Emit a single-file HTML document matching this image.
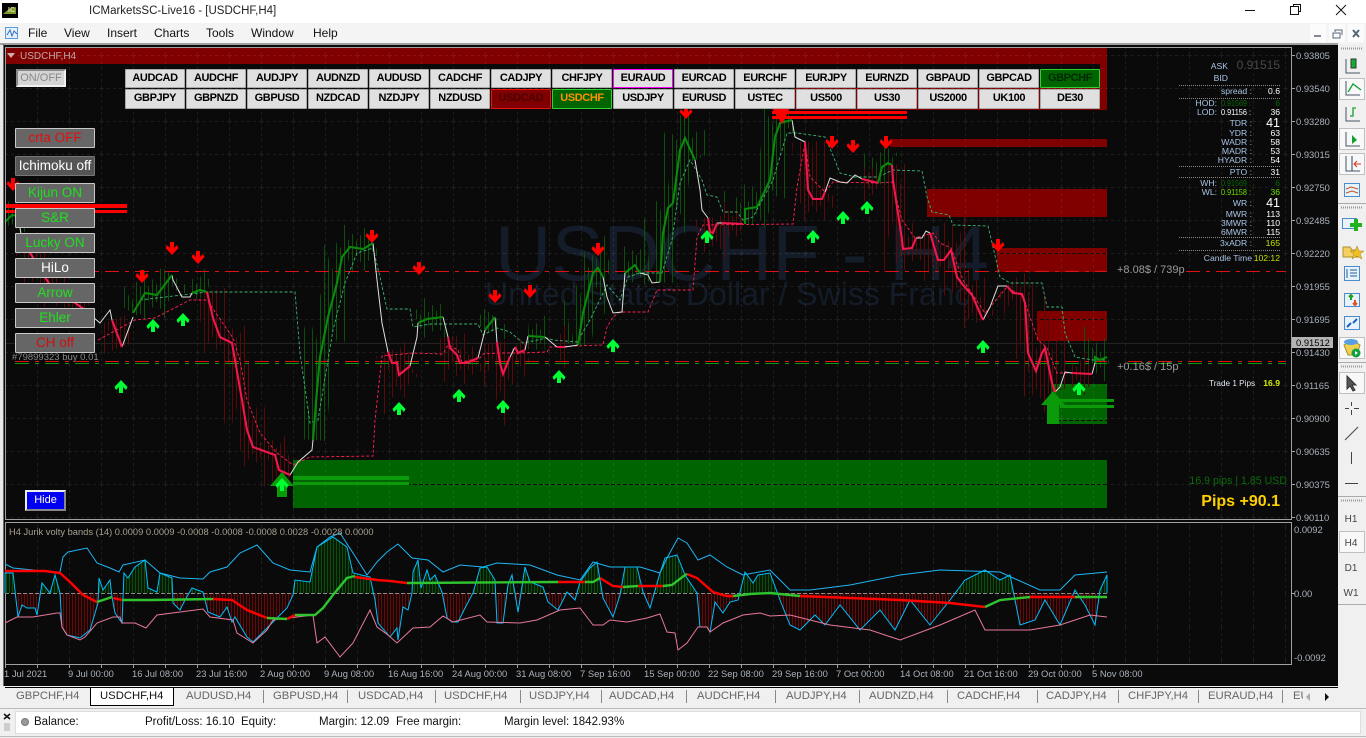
<!DOCTYPE html>
<html><head><meta charset="utf-8"><title>USDCHF,H4</title>
<style>
html,body{margin:0;padding:0;width:1366px;height:738px;overflow:hidden;background:#f0f0f0;font-family:"Liberation Sans",sans-serif}
.a{position:absolute;white-space:nowrap}
#top{left:0;top:0;width:1366px;height:23px;background:#fff}
#menu{left:0;top:23px;width:1366px;height:21px;background:#f4f4f4;font-size:12px;color:#111}
#menu span{position:absolute;top:3px}
.b{position:absolute;width:58px;height:17px;line-height:17px;background:#e0e0e0;border:1px solid #aaa;text-align:center;font-weight:bold;font-size:11px;letter-spacing:-.4px;color:#000;border-radius:1px}
.s{position:absolute;left:15px;width:78px;height:18px;line-height:18px;background:#666;border:1px solid #c8c8c8;text-align:center;font-size:13.5px;color:#1fe01f;border-radius:1px}
.tab{position:absolute;top:690px;font-size:11.3px;color:#666}
.st{position:absolute;top:716px;font-size:11.5px;color:#111}
</style></head><body>
<div class="a" id="top"></div>
<div class="a" id="menu">
<span style="left:28px">File</span><span style="left:64px">View</span><span style="left:107px">Insert</span><span style="left:154px">Charts</span><span style="left:206px">Tools</span><span style="left:251px">Window</span><span style="left:313px">Help</span>
</div>
<div class="a" style="left:89px;top:5px;font-size:11.5px;color:#222">ICMarketsSC-Live16 - [USDCHF,H4]</div>

<svg class="a" style="left:0;top:0" width="1366" height="738" viewBox="0 0 1366 738" xmlns="http://www.w3.org/2000/svg">
<defs>
<pattern id="g1" width="4" height="4" patternUnits="userSpaceOnUse"><rect width="1" height="4" fill="#0b500b"/></pattern>
<pattern id="g2" width="8" height="4" patternUnits="userSpaceOnUse"><rect x="0" width="1" height="4" fill="#0b500b"/></pattern>
<pattern id="g3" width="20" height="4" patternUnits="userSpaceOnUse"><rect x="4" width="1" height="4" fill="#0b500b"/></pattern>
<pattern id="r1" width="4" height="4" patternUnits="userSpaceOnUse"><rect width="1" height="4" fill="#5a0a0a"/></pattern>
<pattern id="r2" width="8" height="4" patternUnits="userSpaceOnUse"><rect x="0" width="1" height="4" fill="#5a0a0a"/></pattern>
<pattern id="r3" width="20" height="4" patternUnits="userSpaceOnUse"><rect x="4" width="1" height="4" fill="#5a0a0a"/></pattern>
<pattern id="hg" width="3" height="4" patternUnits="userSpaceOnUse"><rect width="3" height="4" fill="#061a06"/><rect width="1" height="4" fill="#0d4d0d"/></pattern>
<pattern id="hr" width="3" height="4" patternUnits="userSpaceOnUse"><rect width="3" height="4" fill="#1a0505"/><rect width="1" height="4" fill="#5e0e0e"/></pattern>
<pattern id="grid" x="5" y="22" width="32" height="33" patternUnits="userSpaceOnUse"><path d="M.5 0V33M0 .5H32" stroke="#fff" stroke-opacity=".08" stroke-dasharray="3 3" fill="none"/></pattern>
<pattern id="gridv" x="5" y="0" width="32" height="33" patternUnits="userSpaceOnUse"><path d="M.5 0V33" stroke="#fff" stroke-opacity=".08" stroke-dasharray="3 3" fill="none"/></pattern>
<pattern id="tk" x="5" y="0" width="32" height="8" patternUnits="userSpaceOnUse"><rect width="1" height="8" fill="#a0a0a0"/></pattern>
<clipPath id="up"><rect x="5" y="523" width="1102" height="70"/></clipPath>
<clipPath id="dn"><rect x="5" y="593" width="1102" height="71"/></clipPath>
<clipPath id="main"><rect x="5" y="48" width="1285" height="471"/></clipPath>
<path id="gp" fill="none" d="M5 222L12 215L18 216M133 313L145 293L157 295L172 275M192 293L200 290L207 292M313 440L317 390L320 357L328 317L337 283L342 257L350 247L363 249L373 243M418 323L427 319L443 317M485 330L495 317M528 336L545 337M578 345L583 313L593 273L598 268L603 277M625 273L635 265L640 273M660 282L663 233L668 208L673 203L680 150L685 138L695 160M745 224L745 209L757 207L770 180L775 137L780 123L792 120M878 183L882 167L888 163L892 165M1095 363L1095 357L1100 360L1107 357"/>
<path id="rp" fill="none" d="M22 240L50 285L85 310M112 320L122 347M207 292L213 318L220 337L232 343L235 360L242 400L247 430L253 447L275 455L279 470L290 475M388 352L392 363L397 363L399 375L410 366M448 337L450 348L457 355L460 363L467 363L478 358M497 342L500 363L503 374L510 357M515 347L518 353L525 350M557 347L565 347M708 218L710 232L713 233L717 223M722 223L743 224M805 142L808 190L813 199L822 199L825 192M862 179L878 183M892 165L893 180L902 240L903 249L912 248L916 238M930 233L938 260L944 260L951 250L957 277L963 285L972 295L983 320M1007 286L1013 293L1022 294L1025 303L1028 353L1036 371L1042 353L1045 348L1052 383L1055 392M1072 373L1092 374"/>
<path id="fast" d="M5 593L5 573L13 573L18 617L22 605L27 608L35 608L37 615L42 583L50 593L55 575L60 593L62 627L67 635L80 638L90 630L98 603L99 578L103 590L110 580L112 597L115 613L122 623L124 573L128 578L135 567L145 560L148 588L157 592L160 573L172 578L173 603L180 610L185 600L192 588L203 592L208 612L220 617L227 607L232 622L235 617L247 637L253 642L270 625L287 608L293 595L295 580L310 582L317 547L333 537L347 547L353 573L370 577L375 600L378 623L390 637L397 628L398 640L403 607L408 610L412 593L413 572L418 560L421 588L427 570L430 580L435 575L442 592L447 618L452 622L458 622L465 608L473 593L480 568L487 567L495 580L497 623L503 623L508 585L512 575L518 612L525 567L530 582L543 587L548 602L558 610L567 592L575 600L580 582L590 568L597 562L603 598L613 617L620 595L625 567L637 567L643 592L650 608L660 573L665 558L677 555L685 575L697 593L700 627L707 627L710 632L715 602L723 613L730 602L738 600L745 572L753 583L758 575L770 573L780 600L790 625L800 630L815 615L825 625L840 605L860 630L880 610L895 630L910 600L930 625L950 600L965 580L985 570L1000 580L1010 575L1020 625L1035 620L1045 600L1060 625L1075 590L1085 605L1095 625L1100 590L1107 575L1107 593"/>
<path id="ad" d="M-2-7H2V-1L5-4L6.5-1L0 6L-6.5-1L-5-4L-2-1Z" fill="#f00"/>
<path id="au" d="M-2 7H2V1L5 4L6.5 1L0-6L-6.5 1L-5 4L-2 1Z" fill="#0f3"/>
</defs>

<!-- black area -->
<rect x="0" y="44" width="4" height="642" fill="#e8e8e8"/>
<rect x="3" y="44" width="1335" height="642" fill="#0a0a0a"/>
<rect x="0" y="43" width="1338" height="2" fill="#a0a0a0"/>
<rect x="3" y="44" width="1" height="642" fill="#6a6a6a"/>

<!-- watermark -->
<text x="495" y="280" font-family="Liberation Sans" font-size="78" fill="#131c28">USDCHF - H4</text>
<text x="485" y="305" font-family="Liberation Sans" font-size="32" fill="#131c28">United States Dollar / Swiss Franc</text>

<!-- zones -->
<g fill="#800000">
<rect x="5" y="48" width="1102" height="16"/>
<rect x="1100" y="63" width="7" height="47"/>
<rect x="795" y="88" width="312" height="22"/>
<rect x="890" y="139" width="217" height="8"/>
<rect x="927" y="189" width="180" height="28"/>
<rect x="997" y="248" width="110" height="24"/>
<rect x="1037" y="311" width="70" height="30"/>
</g>
<g fill="#006400">
<rect x="293" y="460" width="814" height="48"/>
<rect x="1051" y="384" width="56" height="40"/>
</g>
<rect x="1051" y="396" width="7" height="24" fill="#0a9a0a"/>
<rect x="5" y="48" width="1285" height="471" fill="url(#grid)"/>
<rect x="5" y="523" width="1285" height="141" fill="url(#gridv)"/>
<path d="M293 484.5H1107M1051 420.5H1107M1040 319.5H1107M1000 253.5H1107" stroke="#111" stroke-dasharray="4 2"/>
<path d="M5 343.5H1291" stroke="#222"/>

<!-- wicks -->
<g clip-path="url(#main)">
<use href="#gp" stroke="url(#g3)" stroke-width="42"/>
<use href="#rp" stroke="url(#r3)" stroke-width="42"/>
<use href="#gp" stroke="url(#g2)" stroke-width="26"/>
<use href="#rp" stroke="url(#r2)" stroke-width="26"/>
<use href="#gp" stroke="url(#g1)" stroke-width="14"/>
<use href="#rp" stroke="url(#r1)" stroke-width="14"/>
</g>

<!-- h lines -->
<path d="M15 271.5H1107M1186 271.5H1286" stroke="#e01010" stroke-dasharray="14 6 4 6" fill="none"/>
<path d="M15 361.5H1107M1128 361.5H1286" stroke="#e01010" stroke-dasharray="14 6 4 6" fill="none"/>
<path d="M15 363.5H1107M1128 363.5H1286" stroke="#0a9a0a" stroke-dasharray="14 6 4 6" fill="none"/>

<!-- signal dashed -->
<path fill="none" stroke="#3cb371" stroke-width=".9" stroke-dasharray="3 2" d="M140 300L207 292L295 292L300 353L310 423L318 420L333 330L345 283L357 253L373 248L380 277L387 309L410 309L413 327L430 324L478 324L483 335L497 328L510 332L523 343L547 338L553 340L577 342L590 320L607 285L620 300L628 277L640 273L662 273L672 240L680 183L690 160L702 180L707 195L717 197L723 212L737 212L743 220L753 217L773 180L787 133L797 133L825 137L832 153L840 173L855 177L878 177L893 170L922 171L927 197L932 212L949 215L953 225L988 226L993 247L1000 277L1010 283L1042 283L1047 307L1062 307L1065 333L1075 357L1093 360L1107 360"/>
<path fill="none" stroke="#ff2050" stroke-width=".9" stroke-dasharray="3 2" d="M98 340L135 320L155 318L190 300L207 300L233 338L240 360L247 400L260 433L277 453L293 465L310 457L373 456L375 420L382 356L413 353L443 354L448 345L458 350L462 362L480 358L483 354L498 353L520 353L547 352L550 347L603 345L607 327L613 317L620 312L648 312L657 290L693 290L697 237L703 225L793 224L797 187L805 143L810 177L825 192L833 182L878 183L892 182L902 220L915 238L933 233L940 243L951 248L963 280L985 313L1007 287L1023 297L1038 340L1047 348L1057 373L1072 373L1092 374"/>

<!-- price lines -->
<path fill="none" stroke="#e0e0e0" stroke-width="1" d="M18 216L22 240M85 310L100 323L110 310L112 320M122 347L133 317M172 275L173 280L182 297L190 297L192 293M290 475L298 462L312 450L313 440M373 243L377 280L382 323L388 352M410 366L417 337L418 323M443 317L448 337M478 358L485 330M495 317L497 342M510 357L515 347M525 350L528 336M545 337L557 347M565 347L578 345M603 277L607 297L613 313L622 312L625 273M640 273L648 275L652 283L660 282M695 160L700 190L702 210L708 218M717 223L722 223M792 120L795 137L805 142M825 192L830 178L840 182L847 183L855 175L862 179M916 238L922 238L926 231L930 233M983 320L990 307L998 286L1007 286M1055 392L1060 387L1065 372L1072 373M1092 374L1095 363"/>
<use href="#gp" stroke="#0b8a0b" stroke-width="2.1"/>
<use href="#rp" stroke="#f0184c" stroke-width="2.1"/>

<!-- thick lines -->
<g fill="#f00"><rect x="5" y="204" width="122" height="4"/><rect x="5" y="210" width="122" height="3"/><rect x="772" y="111" width="135" height="3"/><rect x="772" y="116" width="135" height="3"/></g>
<path d="M772 108L790 108L782 124Z" fill="#f00"/>
<g fill="#0a9a0a"><rect x="293" y="476" width="116" height="4"/><rect x="293" y="482" width="116" height="3"/><rect x="1060" y="399" width="54" height="3"/><rect x="1060" y="405" width="54" height="3"/></g>
<!-- big up arrows -->
<path d="M270 486L282 472L294 486L287 486L287 497L277 497L277 486Z" fill="#0a9a0a"/>
<path d="M1041 405L1053 391L1065 405L1059 405L1059 424L1047 424L1047 405Z" fill="#0a9a0a"/>
<use href="#au" x="282" y="484" />

<!-- arrows -->
<use href="#ad" x="13" y="185"/><use href="#ad" x="142" y="277"/><use href="#ad" x="172" y="249"/><use href="#ad" x="198" y="258"/><use href="#ad" x="372" y="237"/><use href="#ad" x="419" y="269"/><use href="#ad" x="495" y="297"/><use href="#ad" x="530" y="292"/><use href="#ad" x="598" y="250"/><use href="#ad" x="686" y="113"/><use href="#ad" x="832" y="143"/><use href="#ad" x="853" y="147"/><use href="#ad" x="886" y="143"/><use href="#ad" x="998" y="246"/>
<use href="#au" x="153" y="325"/><use href="#au" x="183" y="319"/><use href="#au" x="121" y="386"/><use href="#au" x="399" y="408"/><use href="#au" x="459" y="395"/><use href="#au" x="503" y="406"/><use href="#au" x="559" y="376"/><use href="#au" x="613" y="345"/><use href="#au" x="707" y="236"/><use href="#au" x="813" y="236"/><use href="#au" x="843" y="217"/><use href="#au" x="867" y="207"/><use href="#au" x="983" y="346"/><use href="#au" x="1079" y="388"/>

<!-- frames -->
<path d="M5.5 47.5H1291.5V519.5H5.5ZM5.5 522.5H1291.5V664.5H5.5Z" fill="none" stroke="#a0a0a0"/>
<rect x="5" y="664" width="1100" height="4" fill="url(#tk)"/>
<path d="M1291 55.5h4M1291 88.5h4M1291 121.5h4M1291 154.5h4M1291 187.5h4M1291 220.5h4M1291 253.5h4M1291 286.5h4M1291 319.5h4M1291 352.5h4M1291 385.5h4M1291 418.5h4M1291 451.5h4M1291 484.5h4M1291 517.5h4M1291 593.5h4" stroke="#a0a0a0"/>

<!-- oscillator -->
<use href="#fast" fill="url(#hg)" clip-path="url(#up)"/>
<use href="#fast" fill="url(#hr)" clip-path="url(#dn)"/>
<path d="M5 593.5H1107" stroke="#8a8a8a" stroke-dasharray="4 2"/>
<path fill="none" stroke="#1fb6f5" d="M5 564L13 568L33 570L57 573L60 572L63 557L68 552L87 548L97 563L110 568L119 572L123 565L145 560L160 573L180 578L203 579L210 572L227 567L240 553L257 545L273 563L290 570L310 572L317 547L330 537L340 533L353 553L367 575L377 562L387 552L398 544L412 558L428 560L443 572L460 565L483 567L497 563L530 565L557 575L580 580L593 562L610 567L640 567L660 573L667 558L678 538L687 543L698 560L710 555L727 567L743 575L770 570L790 590L810 590L850 585L900 575L940 570L1000 572L1040 590L1060 590L1075 575L1107 572"/>
<use href="#fast" fill="none" stroke="#00bfff"/>
<path fill="none" stroke="#e8789a" d="M5 623L17 617L33 617L57 613L60 613L62 627L67 635L80 640L85 637L97 623L113 617L120 617L122 623L135 623L146 628L157 615L180 612L203 609L210 617L233 620L237 633L253 643L267 630L273 620L313 615L317 643L325 637L340 657L353 643L370 610L377 627L388 635L397 643L413 628L430 627L443 616L453 622L480 615L487 622L520 623L537 620L560 610L580 608L593 625L603 625L610 620L627 622L647 618L660 614L667 632L675 633L678 650L687 643L698 627L707 627L710 632L723 623L743 615L760 613L770 616L790 615L830 625L870 630L900 640L940 625L975 610L985 630L1030 630L1060 625L1090 615L1107 617"/>
<g fill="none" stroke-width="2.4">
<path stroke="#f00" d="M5 571L45 571L60 573L70 582L83 595L97 602M113 598L122 600M213 599L232 600L247 610L267 618M287 619L295 615M355 577L377 580L390 581L407 583M558 582L585 582M600 578L613 586L623 587M638 586L663 586M687 574L697 578L713 592L727 596L733 596M800 596L850 598L900 600L950 603L985 607M1030 597L1075 597"/>
<path stroke="#2fc42f" d="M97 602L112 597M122 600L152 600L213 599M267 618L287 619M295 615L315 615L323 608L333 595L347 578L355 576M407 583L558 582M585 582L593 582L600 578M623 587L638 586M663 586L672 585L685 575L687 574M733 596L750 594L770 593L800 596M985 607L1000 600L1030 597M1075 597L1107 597"/>
</g>

<!-- axis labels -->
<g font-family="Liberation Sans" font-size="9.4" fill="#aab2bc">
<text x="1296" y="59">0.93805</text><text x="1296" y="92">0.93540</text><text x="1296" y="125">0.93280</text><text x="1296" y="158">0.93015</text><text x="1296" y="191">0.92750</text><text x="1296" y="224">0.92485</text><text x="1296" y="257">0.92220</text><text x="1296" y="290">0.91955</text><text x="1296" y="323">0.91695</text><text x="1296" y="356">0.91430</text><text x="1296" y="389">0.91165</text><text x="1296" y="422">0.90900</text><text x="1296" y="455">0.90635</text><text x="1296" y="488">0.90375</text><text x="1296" y="521">0.90110</text>
<text x="1294" y="533">0.0092</text><text x="1294" y="597">0.00</text><text x="1294" y="661">-0.0092</text>
</g>
<rect x="1292" y="337" width="41" height="11" fill="#b4b4b4"/>
<text x="1296" y="346" font-family="Liberation Sans" font-size="9.4" fill="#000">0.91512</text>
<g font-family="Liberation Sans" font-size="9.4" fill="#aab2bc">
<text x="4" y="677">1 Jul 2021</text><text x="68" y="677">9 Jul 00:00</text><text x="132" y="677">16 Jul 08:00</text><text x="196" y="677">23 Jul 16:00</text><text x="260" y="677">2 Aug 00:00</text><text x="324" y="677">9 Aug 08:00</text><text x="388" y="677">16 Aug 16:00</text><text x="452" y="677">24 Aug 00:00</text><text x="516" y="677">31 Aug 08:00</text><text x="580" y="677">7 Sep 16:00</text><text x="644" y="677">15 Sep 00:00</text><text x="708" y="677">22 Sep 08:00</text><text x="772" y="677">29 Sep 16:00</text><text x="836" y="677">7 Oct 00:00</text><text x="900" y="677">14 Oct 08:00</text><text x="964" y="677">21 Oct 16:00</text><text x="1028" y="677">29 Oct 00:00</text><text x="1092" y="677">5 Nov 08:00</text>
</g>
<text x="9" y="535" font-family="Liberation Sans" font-size="9.34" fill="#a8a090">H4 Jurik volty bands (14) 0.0009 0.0009 -0.0008 -0.0008 -0.0008 0.0028 -0.0028 0.0000</text>

<!-- chart header -->
<path d="M7 53H15L11 58Z" fill="#c8b0b0"/>
<text x="20" y="59" font-family="Liberation Sans" font-size="10" fill="#c0a8a8">USDCHF,H4</text>
<text x="1117" y="273" font-family="Liberation Sans" font-size="11" fill="#9a9a9a">+8.08$ / 739p</text>
<text x="1117" y="370" font-family="Liberation Sans" font-size="11" fill="#9a9a9a">+0.16$ / 15p</text>

<!-- info panel -->
<g font-family="Liberation Sans" font-size="8.6" fill="#a9c5e6" text-anchor="end">
<text x="1228" y="69">ASK</text><text x="1228" y="81">BID</text>
<text x="1252" y="94">spread :</text><text x="1217" y="106">HOD:</text><text x="1217" y="115">LOD:</text>
<text x="1252" y="126">TDR :</text><text x="1252" y="136">YDR :</text><text x="1252" y="145">WADR :</text><text x="1252" y="154">MADR :</text><text x="1252" y="163">HYADR :</text><text x="1252" y="175">PTO :</text>
<text x="1217" y="186">WH:</text><text x="1217" y="195">WL:</text><text x="1252" y="206">WR :</text><text x="1252" y="217">MWR :</text><text x="1252" y="226">3MWR :</text><text x="1252" y="235">6MWR :</text><text x="1252" y="246">3xADR :</text><text x="1252" y="261">Candle Time</text>
</g>
<g font-family="Liberation Sans" font-size="8.6" fill="#fff" text-anchor="end">
<text x="1280" y="94">0.6</text><text x="1280" y="106" fill="#0a6a0a">6</text><text x="1280" y="115">36</text>
<text x="1280" y="127" font-size="12.5">41</text><text x="1280" y="136">63</text><text x="1280" y="145">58</text><text x="1280" y="154">53</text><text x="1280" y="163">54</text><text x="1280" y="175">31</text>
<text x="1280" y="186" fill="#0a6a0a">6</text><text x="1280" y="195" fill="#6fe000">36</text>
<text x="1280" y="207" font-size="12.5">41</text><text x="1280" y="217">113</text><text x="1280" y="226">110</text><text x="1280" y="235">115</text><text x="1280" y="246" fill="#c8e000">165</text><text x="1280" y="261" fill="#c8e000">102:12</text>
</g>
<g font-family="Liberation Sans" font-size="8.6">
<text x="1221" y="106" fill="#0a6a0a" textLength="30" lengthAdjust="spacingAndGlyphs">0.91569 :</text>
<text x="1221" y="115" fill="#fff" textLength="30" lengthAdjust="spacingAndGlyphs">0.91156 :</text>
<text x="1221" y="186" fill="#0a6a0a" textLength="30" lengthAdjust="spacingAndGlyphs">0.91569 :</text>
<text x="1221" y="195" fill="#6fe000" textLength="30" lengthAdjust="spacingAndGlyphs">0.91158 :</text>
</g>
<text x="1280" y="69" text-anchor="end" font-family="Liberation Sans" font-size="12" fill="#4a4a4a">0.91515</text>
<path d="M1179 85.5H1281M1179 98.5H1281M1179 166.5H1281M1179 177.5H1281M1179 237.5H1281M1179 250.5H1281" stroke="#8a8a8a" stroke-dasharray="1 1"/>
<text x="1209" y="386" font-family="Liberation Sans" font-size="8.2" fill="#dfe6f0">Trade 1 Pips</text>
<text x="1280" y="386" text-anchor="end" font-family="Liberation Sans" font-size="8.6" font-weight="bold" fill="#d8f000">16.9</text>
<text x="1287" y="484" text-anchor="end" font-family="Liberation Sans" font-size="10.6" fill="#0b6b0b">16.9 pips | 1.85 USD</text>
<text x="1280" y="506" text-anchor="end" font-family="Liberation Sans" font-size="16" font-weight="bold" fill="#ffd000">Pips +90.1</text>

<!-- title bar icons -->
<rect x="2" y="3" width="16" height="15" fill="#000"/>
<path d="M3 14L9 9L16 7V14Z" fill="#7a9a30"/><text x="8" y="12" font-family="Liberation Sans" font-size="7" font-weight="bold" fill="#e8e0a0">IC</text>
<rect x="5.5" y="27.5" width="12" height="11" fill="#e6f0fa" stroke="#5a9bd8"/><path d="M7 35L10 30L12 36L14 31L17 34" fill="none" stroke="#3070c0"/>
<path d="M1245 10.5H1255" stroke="#111"/>
<path d="M1293.5 6V4.5H1300.5V11.5H1299" fill="none" stroke="#111"/><rect x="1290.5" y="6.5" width="8" height="8" fill="#fff" stroke="#111"/>
<path d="M1336 5L1346 15M1346 5L1336 15" stroke="#111"/>
<rect x="1310" y="24" width="16" height="18" fill="#fbfbfb"/><rect x="1329" y="24" width="16" height="18" fill="#fbfbfb"/><rect x="1348" y="24" width="16" height="18" fill="#fbfbfb"/>
<rect x="1314" y="35" width="7" height="2" fill="#889"/>
<rect x="1333" y="33" width="7" height="5" fill="none" stroke="#567"/><path d="M1335 32V30H1342V35" fill="none" stroke="#567"/>
<path d="M1353 30L1359 37M1359 30L1353 37" stroke="#567" stroke-width="2"/>

<!-- right toolbar -->
<rect x="1338" y="44" width="28" height="642" fill="#f0f0f0"/>
<path d="M1341 48.5H1363M1341 207.5H1363M1341 366.5H1363M1341 500.5H1363" stroke="#999" stroke-dasharray="1 1" stroke-width="2"/>
<path d="M1338 203.5H1366M1338 362.5H1366M1338 496.5H1366M1338 604.5H1366" stroke="#aaa"/>
<g fill="#f8f8f8" stroke="#c0c0c0"><rect x="1339.5" y="78.5" width="25" height="21"/><rect x="1339.5" y="128.5" width="25" height="21"/><rect x="1339.5" y="153.5" width="25" height="21"/><rect x="1339.5" y="337.5" width="25" height="21"/><rect x="1339.5" y="372.5" width="25" height="21"/><rect x="1339.5" y="531.5" width="25" height="21"/></g>
<g fill="none" stroke="#456">
<path d="M1346 59V73H1360M1346 107V121H1360M1346 132V146H1360M1346 156V171H1360M1346 81V95H1360"/>
</g>
<rect x="1351" y="59" width="5" height="9" fill="#10b030" stroke="#333"/>
<path d="M1348 92L1353 84L1361 90" fill="none" stroke="#10a030" stroke-width="1.3"/>
<path d="M1350 116H1353V108H1356" fill="none" stroke="#10a030" stroke-width="1.3"/>
<path d="M1352 135L1357 140L1352 144Z" fill="#10a030"/>
<path d="M1352 156V171" stroke="#246"/><path d="M1361 164H1355M1357 161L1354 164L1357 167" stroke="#d03010" fill="none"/>
<g fill="#e8f2fb" stroke="#4a8ccc"><rect x="1344.5" y="183.5" width="15" height="13"/><rect x="1344.5" y="266.5" width="15" height="14"/><rect x="1344.5" y="293.5" width="15" height="13"/><rect x="1344.5" y="316.5" width="15" height="13"/><rect x="1342.5" y="218.5" width="14" height="10"/></g>
<path d="M1346 189L1351 187L1358 189M1346 193L1352 191L1358 193" fill="none" stroke="#c05020"/>
<path d="M1350 225H1362M1356 219V231" stroke="#20b020" stroke-width="4"/>
<path d="M1343 247H1350L1352 250H1358V257H1343Z" fill="#f4d060" stroke="#b09030"/><path d="M1357 246L1359 251L1364 251L1360 254L1362 259L1357 256L1352 259L1354 254L1350 251L1355 251Z" fill="#f0c020" stroke="#a08020" stroke-width=".5"/>
<path d="M1347 269V278M1350 270H1357M1350 273H1357M1350 276H1357" stroke="#2060a0"/>
<path d="M1351 295V300M1349 297L1351 295L1353 297" stroke="#20a020" stroke-width="2" fill="none"/><path d="M1355 305V300M1353 303L1355 305L1357 303" stroke="#e05020" stroke-width="2" fill="none"/>
<path d="M1347 327L1351 323M1357 319L1353 323" stroke="#2060c0" stroke-width="2"/>
<path d="M1344 345L1352 340L1360 345L1357 355H1348Z" fill="#f0d050" stroke="#a09030"/><ellipse cx="1351" cy="342" rx="7" ry="3" fill="#5aa0e0"/><circle cx="1356" cy="353" r="4.5" fill="#10a040"/><path d="M1355 351L1358 353L1355 355Z" fill="#fff"/>
<path d="M1347 376L1347 389L1350 386L1353 391L1355 390L1352 385L1356 385Z" fill="#555" stroke="#333"/>
<path d="M1351.5 402V406M1351.5 410V415M1345 408.5H1349M1354 408.5H1359" stroke="#444"/>
<path d="M1345 440L1358 427" stroke="#555" stroke-width="1.2"/>
<path d="M1351.5 452V464" stroke="#444"/><path d="M1345 483.5H1358" stroke="#444"/>
<g font-family="Liberation Sans" font-size="10" fill="#444" text-anchor="middle"><text x="1351" y="522">H1</text><text x="1351" y="546">H4</text><text x="1351" y="571">D1</text><text x="1351" y="596">W1</text></g>

<!-- tabs -->
<rect x="0" y="686" width="1338" height="22" fill="#f0f0f0"/>
<path d="M5 687.5H90M174 687.5H1338" stroke="#000"/>
<rect x="90.5" y="687.5" width="83" height="18" fill="#fff" stroke="#000"/>
<path d="M263.5 690V703M347.5 690V703M435.5 690V703M520.5 690V703M601.5 690V703M686.5 690V703M775.5 690V703M859.5 690V703M947.5 690V703M1037.5 690V703M1118.5 690V703M1198.5 690V703M1282.5 690V703" stroke="#888"/>
<path d="M1310 693V701L1306 697Z" fill="#aaa"/><path d="M1325 693V701L1329 697Z" fill="#111"/>
<!-- status -->
<rect x="0" y="708" width="1366" height="30" fill="#f0f0f0"/>
<path d="M0 708.5H1366M0 736.5H1366" stroke="#bbb"/>
<rect x="15.5" y="711.5" width="1345" height="22" fill="#fff" stroke="#ddd"/>
<path d="M4 714L10 719M10 714L4 719" stroke="#111" stroke-width="1.5"/>
<path d="M4 724H10M4 726H10M4 728H10M4 730H10" stroke="#aaa"/>
<circle cx="25" cy="722" r="3.5" fill="#999" stroke="#777"/>
</svg>

<!-- side buttons -->
<div class="a" style="left:16px;top:69px;width:46px;height:14px;line-height:15px;background:#d4d4d4;border:2px solid;border-color:#888 #f0f0f0 #f0f0f0 #888;text-align:center;font-size:11px;color:#8a8a8a">ON/OFF</div>
<div class="s" style="top:128px;color:#e01010">crta OFF</div>
<div class="s" style="top:156px;color:#fff;background:#555;border-color:#777">Ichimoku off</div>
<div class="s" style="top:183px">Kijun ON</div>
<div class="s" style="top:208px">S&amp;R</div>
<div class="s" style="top:233px">Lucky ON</div>
<div class="s" style="top:258px;color:#fff">HiLo</div>
<div class="s" style="top:283px">Arrow</div>
<div class="s" style="top:308px">Ehler</div>
<div class="s" style="top:333px;color:#d01010">CH off</div>
<div class="a" style="left:12px;top:352px;font-size:9.5px;color:#8a8a8a">#79899323 buy 0.01</div>
<div class="a" style="left:25px;top:490px;width:37px;height:17px;line-height:17px;background:#0000f0;border:2px solid;border-color:#eee #888 #888 #eee;text-align:center;color:#fff;font-size:11px">Hide</div>

<!-- symbol buttons -->
<div class="b" style="left:125px;top:69px">AUDCAD</div><div class="b" style="left:186px;top:69px">AUDCHF</div><div class="b" style="left:247px;top:69px">AUDJPY</div><div class="b" style="left:308px;top:69px">AUDNZD</div><div class="b" style="left:369px;top:69px">AUDUSD</div><div class="b" style="left:430px;top:69px">CADCHF</div><div class="b" style="left:491px;top:69px">CADJPY</div><div class="b" style="left:552px;top:69px">CHFJPY</div><div class="b" style="left:613px;top:69px;border-color:#f0f">EURAUD</div><div class="b" style="left:674px;top:69px">EURCAD</div><div class="b" style="left:735px;top:69px">EURCHF</div><div class="b" style="left:796px;top:69px">EURJPY</div><div class="b" style="left:857px;top:69px">EURNZD</div><div class="b" style="left:918px;top:69px">GBPAUD</div><div class="b" style="left:979px;top:69px">GBPCAD</div><div class="b" style="left:1040px;top:69px;background:#006400;border-color:#30d030;color:#002800">GBPCHF</div>
<div class="b" style="left:125px;top:89px;height:18px">GBPJPY</div><div class="b" style="left:186px;top:89px;height:18px">GBPNZD</div><div class="b" style="left:247px;top:89px;height:18px">GBPUSD</div><div class="b" style="left:308px;top:89px;height:18px">NZDCAD</div><div class="b" style="left:369px;top:89px;height:18px">NZDJPY</div><div class="b" style="left:430px;top:89px;height:18px">NZDUSD</div><div class="b" style="left:491px;top:89px;height:18px;background:#800000;border-color:#f01010;color:#4a0000">USDCAD</div><div class="b" style="left:552px;top:89px;height:18px;background:#006400;border-color:#30d030;color:#ff9000">USDCHF</div><div class="b" style="left:613px;top:89px;height:18px">USDJPY</div><div class="b" style="left:674px;top:89px;height:18px">EURUSD</div><div class="b" style="left:735px;top:89px;height:18px">USTEC</div><div class="b" style="left:796px;top:89px;height:18px">US500</div><div class="b" style="left:857px;top:89px;height:18px">US30</div><div class="b" style="left:918px;top:89px;height:18px">US2000</div><div class="b" style="left:979px;top:89px;height:18px">UK100</div><div class="b" style="left:1040px;top:89px;height:18px">DE30</div>

<!-- tab labels -->
<span class="tab" style="left:16px">GBPCHF,H4</span><span class="tab" style="left:100px;color:#111">USDCHF,H4</span><span class="tab" style="left:186px">AUDUSD,H4</span><span class="tab" style="left:273px">GBPUSD,H4</span><span class="tab" style="left:358px">USDCAD,H4</span><span class="tab" style="left:444px">USDCHF,H4</span><span class="tab" style="left:529px">USDJPY,H4</span><span class="tab" style="left:609px">AUDCAD,H4</span><span class="tab" style="left:697px">AUDCHF,H4</span><span class="tab" style="left:786px">AUDJPY,H4</span><span class="tab" style="left:869px">AUDNZD,H4</span><span class="tab" style="left:957px">CADCHF,H4</span><span class="tab" style="left:1046px">CADJPY,H4</span><span class="tab" style="left:1128px">CHFJPY,H4</span><span class="tab" style="left:1208px">EURAUD,H4</span><span class="tab" style="left:1293px;width:10px;overflow:hidden">EURCAD</span>

<!-- status labels -->
<span class="st" style="left:34px">Balance:</span><span class="st" style="left:145px">Profit/Loss: 16.10</span><span class="st" style="left:241px">Equity:</span><span class="st" style="left:319px">Margin: 12.09</span><span class="st" style="left:396px">Free margin:</span><span class="st" style="left:504px">Margin level: 1842.93%</span>
</body></html>
